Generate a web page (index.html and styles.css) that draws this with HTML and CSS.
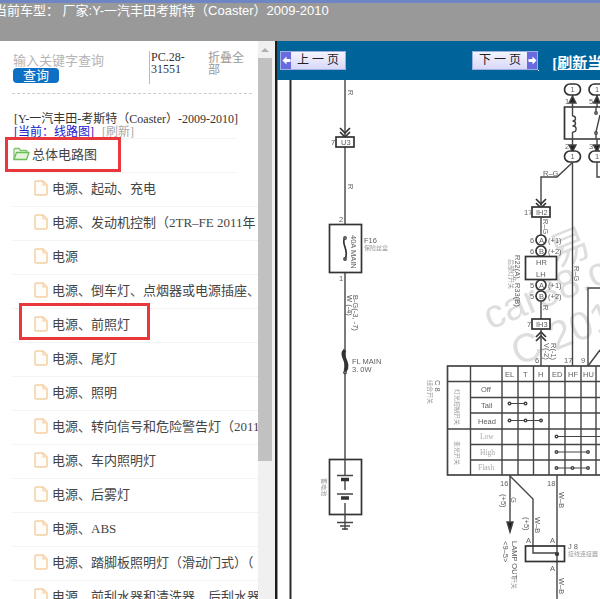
FILE: index.html
```html
<!DOCTYPE html>
<html lang="zh-CN">

<head>
    <meta charset="UTF-8">
    <title>线路图</title>
    <link rel="stylesheet" href="styles.css">
</head>

<body>
    <div class="topbar">
        <div class="car-title">当前车型： 厂家:Y-一汽丰田考斯特（Coaster）2009-2010</div>
    </div>

    <div class="main">
        <div class="side">
            <div class="search">
                <div class="search-left">
                    <div class="hint">输入关键字查询</div>
                    <div class="search-btn">查询</div>
                </div>
                <div class="pc-code">PC.28-31551</div>
                <div class="fold">折叠全部</div>
            </div>

            <div class="crumb">
                <div>[Y-一汽丰田-考斯特（Coaster）-2009-2010]</div>
                <div><a class="now">[当前：线路图]</a> <a class="refresh">[刷新]</a></div>
            </div>

            <ul class="tree">
                <li class="root">
                    <svg class="ico" width="17" height="14" viewBox="0 0 17 14">
                        <path d="M1 12.5V2.5Q1 1.5 2 1.5H6L7.5 3.5H13Q14 3.5 14 4.5V5.500" fill="#eef8e8" stroke="#7cc46a" stroke-width="1.300"/>
                        <path d="M1 12.500L3.500 5.500H16L13.500 12.500Z" fill="#e4f5da" stroke="#6cbc58" stroke-width="1.300"/>
                    </svg>
                    总体电路图
                    <span class="mark mark-root"></span>
                </li>
                <li><svg class="ico" width="14" height="16" viewBox="0 0 14 16"><use href="#doc"/></svg>电源、起动、充电</li>
                <li><svg class="ico" width="14" height="16" viewBox="0 0 14 16"><use href="#doc"/></svg>电源、发动机控制（2TR–FE 2011年</li>
                <li><svg class="ico" width="14" height="16" viewBox="0 0 14 16"><use href="#doc"/></svg>电源</li>
                <li><svg class="ico" width="14" height="16" viewBox="0 0 14 16"><use href="#doc"/></svg>电源、倒车灯、点烟器或电源插座、</li>
                <li><svg class="ico" width="14" height="16" viewBox="0 0 14 16"><use href="#doc"/></svg>电源、前照灯<span class="mark mark-item"></span></li>
                <li><svg class="ico" width="14" height="16" viewBox="0 0 14 16"><use href="#doc"/></svg>电源、尾灯</li>
                <li><svg class="ico" width="14" height="16" viewBox="0 0 14 16"><use href="#doc"/></svg>电源、照明</li>
                <li><svg class="ico" width="14" height="16" viewBox="0 0 14 16"><use href="#doc"/></svg>电源、转向信号和危险警告灯（2011</li>
                <li><svg class="ico" width="14" height="16" viewBox="0 0 14 16"><use href="#doc"/></svg>电源、车内照明灯</li>
                <li><svg class="ico" width="14" height="16" viewBox="0 0 14 16"><use href="#doc"/></svg>电源、后雾灯</li>
                <li><svg class="ico" width="14" height="16" viewBox="0 0 14 16"><use href="#doc"/></svg>电源、ABS</li>
                <li><svg class="ico" width="14" height="16" viewBox="0 0 14 16"><use href="#doc"/></svg>电源、踏脚板照明灯（滑动门式）（</li>
                <li><svg class="ico" width="14" height="16" viewBox="0 0 14 16"><use href="#doc"/></svg>电源、前刮水器和清洗器、后刮水器</li>
            </ul>
        </div>

        <div class="scroll">
            <div class="scroll-up"></div>
            <div class="scroll-thumb"></div>
        </div>

        <div class="viewer">
            <div class="pager">
                <div class="page-btn">
                    <span class="arrow">
                        <svg width="9" height="9" viewBox="0 0 9 9"><path d="M0.500 4.500L4.500 0.500V3H8.500V6H4.500V8.500Z" fill="#fff"/></svg>
                    </span>
                    <span class="page-label">上 一 页</span>
                </div>
                <div class="page-btn next">
                    <span class="page-label">下 一 页</span>
                    <span class="arrow">
                        <svg width="9" height="9" viewBox="0 0 9 9"><path d="M8.500 4.500L4.500 0.500V3H0.500V6H4.500V8.500Z" fill="#fff"/></svg>
                    </span>
                </div>
                <span class="gap-link">&nbsp;</span>
                <span class="refresh-link">[刷新当前页]</span>
            </div>

            <svg class="diagram" width="323" height="519" viewBox="277 80 323 519">
                <!-- watermark -->
                <g class="wm">
                    <text x="556" y="268" font-size="40" transform="rotate(-22 556 268)">易</text>
                    <text x="490" y="330" font-size="40" transform="rotate(-22 490 330)">car88.c</text>
                    <text x="518" y="366" font-size="40" transform="rotate(-22 518 366)">C 201</text>
                </g>

                <g class="wire">
                    <line class="edge" x1="277.500" y1="80" x2="277.500" y2="599"/>
                    <line class="frame" x1="290.500" y1="80" x2="290.500" y2="599"/>

                    <!-- left column -->
                    <line x1="345" y1="80" x2="345" y2="459"/>
                    <path class="mid" d="M340 128L345 133L350 128M340 132L345 137L350 132"/>
                    <rect class="bg mid" x="336" y="137" width="18" height="10"/>
                    <rect class="bg mid" x="329.500" y="224.500" width="32" height="48"/>
                    <path class="mid" d="M345 238C340 243 350 250 345 259"/>
                    <circle class="bg" cx="345" cy="238" r="1.200"/>
                    <circle class="bg" cx="345" cy="259" r="1.200"/>
                    <path class="fat" d="M345 350C339 356 351 363 345 371"/>
                    <circle class="bg" cx="345" cy="372.500" r="1.200"/>
                    <rect class="bg mid" x="329.500" y="459.500" width="32" height="55"/>
                    <line x1="345" y1="459" x2="345" y2="475"/>
                    <line x1="345" y1="481" x2="345" y2="490"/>
                    <line x1="345" y1="503" x2="345" y2="530"/>
                    <path d="M337 475.500H353M337 494H353M337 522.500H353M340 526H350M342 529H348"/>
                    <path class="fat" d="M341 479.500H349M341 498H349"/>

                    <!-- relay -->
                    <line x1="572.500" y1="95" x2="572.500" y2="107"/>
                    <line x1="597" y1="95" x2="597" y2="107"/>
                    <path class="tip" d="M569 103L572.500 96L576 103Z"/>
                    <path class="tip" d="M593.500 103L597 96L600 103Z"/>
                    <path class="mid" d="M600 107H564.500V139H600"/>
                    <path d="M572.500 107V116M572.500 132V139"/>
                    <path d="M572.500 116A3 2.500 0 0 1 572.500 121A3 2.500 0 0 1 572.500 126A3 2.500 0 0 1 572.500 132"/>
                    <path d="M596 107V113M596 133V139M600 115L596 132"/>
                    <circle class="bg" cx="596" cy="113" r="1.200"/>
                    <circle class="bg" cx="596" cy="133" r="1.200"/>
                    <line x1="572.500" y1="139" x2="572.500" y2="151"/>
                    <line x1="597" y1="139" x2="597" y2="151"/>
                    <path class="tip" d="M569 145L572.500 152L576 145Z"/>
                    <path class="tip" d="M593.500 145L597 152L600 145Z"/>
                    <rect class="bg mid" x="564.500" y="84" width="16" height="11" rx="5.500"/>
                    <rect class="bg mid" x="589" y="84" width="16" height="11" rx="5.500"/>
                    <rect class="bg mid" x="564.500" y="151" width="16" height="11" rx="5.500"/>
                    <rect class="bg mid" x="589" y="151" width="16" height="11" rx="5.500"/>
                    <path d="M597 162V177H600"/>

                    <line x1="572.500" y1="162" x2="572.500" y2="366"/>
                    <path d="M572 163L557 177H541V207"/>
                    <path class="mid" d="M536 199L541 204L546 199M536 203L541 208L546 203"/>
                    <rect class="bg mid" x="532" y="207" width="18" height="10"/>
                    <line x1="541" y1="217" x2="541" y2="240"/>
                    <circle class="bg mid" cx="541" cy="240" r="5"/>
                    <circle class="bg mid" cx="541" cy="251" r="5"/>
                    <rect class="bg mid" x="525.500" y="256.500" width="31" height="23"/>
                    <circle class="bg mid" cx="541" cy="285" r="5"/>
                    <circle class="bg mid" cx="541" cy="296" r="5"/>
                    <line x1="541" y1="301" x2="541" y2="319"/>
                    <rect class="bg mid" x="532" y="319" width="18" height="10"/>
                    <path class="mid" d="M536 337L541 332L546 337M536 341L541 336L546 341"/>
                    <line x1="541" y1="329" x2="541" y2="366"/>
                    <path d="M588 366V288H600"/>
                    <path d="M588 366L600 350"/>

                    <!-- switch table -->
                    <rect class="thick" x="447.500" y="366" width="160" height="109"/>
                    <path d="M470.500 366V475M502 366V475M518 366V475M533.500 366V475M549 366V475M565 366V475M581 366V475M596 366V475"/>
                    <path d="M447 381.500H600M470.500 397.500H600M470.500 413H600M447 429H600M470.500 444.500H600M470.500 460H600"/>
                    <path class="thin" d="M509 403.500H526M509 420.500H542"/>
                    <path class="thin" d="M556 436.500H600M556 452H588M556 468H588"/>
                    <circle class="bg" cx="509.500" cy="403.500" r="1.300"/>
                    <circle class="bg" cx="525.500" cy="403.500" r="1.300"/>
                    <circle class="bg" cx="509.500" cy="420.500" r="1.300"/>
                    <circle class="bg" cx="525.500" cy="420.500" r="1.300"/>
                    <circle class="bg" cx="541" cy="420.500" r="1.300"/>
                    <circle class="bg" cx="556.500" cy="436.500" r="1.300"/>
                    <circle class="bg" cx="556.500" cy="452" r="1.300"/>
                    <circle class="bg" cx="588" cy="452" r="1.300"/>
                    <circle class="bg" cx="556.500" cy="468" r="1.300"/>
                    <circle class="bg" cx="572.500" cy="468" r="1.300"/>
                    <circle class="bg" cx="588" cy="468" r="1.300"/>

                    <!-- below table -->
                    <path d="M510 475V532"/>
                    <path class="tip" d="M507 522L510 532L513 522Z"/>
                    <path d="M510 476L533 499V553H557"/>
                    <line x1="557" y1="475" x2="557" y2="599"/>
                    <rect class="mid" x="525.500" y="546" width="39" height="15.500"/>
                    <circle class="dot" cx="557" cy="554" r="1.500"/>
                </g>

                <g class="lbl">
                    <text class="rot" transform="translate(348 90) rotate(90)">R</text>
                    <text class="rot" transform="translate(348 184) rotate(90)">R</text>
                    <text x="331" y="145">7</text>
                    <text x="341" y="145">U3</text>
                    <text x="339" y="222">2</text>
                    <text x="339" y="281">1</text>
                    <text transform="translate(351 235) rotate(90)">40A MAIN</text>
                    <text x="364" y="243">F16</text>
                    <text class="tiny" x="364" y="250">保险丝盒</text>
                    <text transform="translate(353 295) rotate(90)">B-G(-3, -7)</text>
                    <text transform="translate(347 295) rotate(90)">W (-4)</text>
                    <text x="352" y="364">FL MAIN</text>
                    <text x="352" y="372">3. 0W</text>
                    <text class="tiny" transform="translate(322 478) rotate(90)">蓄电池</text>

                    <text x="570.500" y="92">1</text>
                    <text x="595" y="92">1</text>
                    <text x="570.500" y="159">1</text>
                    <text x="595" y="159">1</text>
                    <text x="565" y="104">1</text>
                    <text x="589" y="104">5</text>
                    <text x="565" y="149">2</text>
                    <text x="589" y="149">3</text>
                    <text x="543" y="176">R–G</text>
                    <text x="524" y="215">17</text>
                    <text x="536" y="215">IH2</text>
                    <text transform="translate(543 219) rotate(90)">R–G</text>
                    <text x="530" y="243">6</text>
                    <text x="539" y="243">A</text>
                    <text x="548" y="243">(+1)</text>
                    <text x="530" y="254">6</text>
                    <text x="539" y="254">B</text>
                    <text x="548" y="254">(+2)</text>
                    <text x="536" y="265">HR</text>
                    <text x="536" y="277">LH</text>
                    <text x="530" y="288">5</text>
                    <text x="539" y="288">A</text>
                    <text x="548" y="288">(+1)</text>
                    <text x="530" y="299">5</text>
                    <text x="539" y="299">B</text>
                    <text x="548" y="299">(+2)</text>
                    <text transform="translate(515 255) rotate(90)">R22(A), R33(B)</text>
                    <text class="tiny" transform="translate(509 259) rotate(90)">后部灯开关</text>
                    <text transform="translate(543 305) rotate(90)">R</text>
                    <text x="527" y="327">7</text>
                    <text x="536" y="327">IH3</text>
                    <text transform="translate(551 343) rotate(90)">R(-1)</text>
                    <text transform="translate(544 343) rotate(90)">V(-2)</text>
                    <text transform="translate(574 266) rotate(90)">R–G</text>
                    <text x="535" y="363">6</text>
                    <text x="564" y="363">17</text>
                    <text x="581" y="363">9</text>

                    <text x="505" y="377">EL</text>
                    <text x="523" y="377">T</text>
                    <text x="538" y="377">H</text>
                    <text x="552" y="377">ED</text>
                    <text x="568" y="377">HF</text>
                    <text x="583" y="377">HU</text>
                    <text x="481" y="392">Off</text>
                    <text x="481" y="408">Tail</text>
                    <text x="478" y="424">Head</text>
                    <text class="pale" x="480" y="439">Low</text>
                    <text class="pale" x="480" y="455">High</text>
                    <text class="pale" x="478" y="470">Flash</text>
                    <text transform="translate(435 380) rotate(90)">C 8</text>
                    <text class="tiny" transform="translate(428 380) rotate(90)">组合开关</text>
                    <text class="tiny" transform="translate(455 389) rotate(90)">灯光控制开关</text>
                    <text class="tiny" transform="translate(455 441) rotate(90)">变光开关</text>

                    <text x="500" y="486">16</text>
                    <text x="547" y="486">18</text>
                    <text transform="translate(501 494) rotate(90)">(+5)</text>
                    <text transform="translate(511 497) rotate(90)">G</text>
                    <text transform="translate(524 517) rotate(90)">(+5)</text>
                    <text transform="translate(535 517) rotate(90)">W–B</text>
                    <text transform="translate(559 492) rotate(90)">W–B</text>
                    <text x="526" y="543">A</text>
                    <text x="550" y="543">A</text>
                    <text x="550" y="571">A</text>
                    <text x="568" y="549">J 8</text>
                    <text class="tiny" x="568" y="556">接线连接器</text>
                    <text transform="translate(512 541) rotate(90)">LAMP OUT</text>
                    <text class="tiny" transform="translate(512 577) rotate(90)">开关</text>
                    <text transform="translate(503 541) rotate(90)">&lt;9–5&gt;</text>
                    <text transform="translate(559 578) rotate(90)">W–B</text>
                </g>
            </svg>
        </div>
    </div>

    <svg width="0" height="0" class="defs">
        <symbol id="doc" viewBox="0 0 14 16">
            <path d="M1 2Q1 1 2 1H9L13 5V14Q13 15 12 15H2Q1 15 1 14Z" fill="#fffdf9" stroke="#f4cfa2" stroke-width="1.500"/>
            <path d="M9 1V5H13" fill="none" stroke="#f4cfa2" stroke-width="1.200"/>
        </symbol>
    </svg>
</body>

</html>
```

FILE: styles.css
```css
html, body {
    margin: 0;
    height: 599px;
    overflow: hidden;
}

body {
    display: flex;
    flex-direction: column;
    background-color: #ffffff;
    font-family: "Liberation Serif", "Noto Sans CJK SC", serif;
    font-size: 13px;
    color: #333333;
}

/* top bar */
.topbar {
    height: 38px;
    flex-shrink: 0;
    background-color: #999999;
    border-top: 3px solid #6f86c4;
    overflow: hidden;
}

.car-title {
    margin-left: -6px;
    margin-top: -1px;
    font-family: "Liberation Sans", "Noto Sans CJK SC", sans-serif;
    font-size: 13px;
    line-height: 18px;
    color: #ffffff;
    white-space: nowrap;
}

.main {
    display: flex;
    flex: 1;
    min-height: 0;
}

/* left panel */
.side {
    width: 258px;
    flex-shrink: 0;
    overflow: hidden;
}

.search {
    display: flex;
    height: 42px;
    margin: 10px 6px 0 12px;
    border-bottom: 1px dashed #cccccc;
}

.search-left {
    width: 136px;
    padding-left: 1px;
    padding-top: 3px;
}

.hint {
    color: #b5b5b5;
    line-height: 14px;
    white-space: nowrap;
}

.search-btn {
    width: 46px;
    height: 15px;
    background-color: #0e70c4;
    border-radius: 4px;
    color: #ffffff;
    text-align: center;
    line-height: 15px;
}

.pc-code {
    width: 59px;
    height: 33px;
    padding: 0 23px 0 1px;
    border-left: 1px solid #bbbbbb;
    font-size: 12px;
    line-height: 12px;
    box-sizing: border-box;
    word-break: break-word;
}

.fold {
    width: 37px;
    padding-top: 1px;
    font-size: 12px;
    line-height: 12px;
    color: #999999;
}

.crumb {
    margin: 19px 0 0 14px;
    font-size: 12px;
    line-height: 13px;
    color: #333333;
    white-space: nowrap;
}

.now {
    color: #1a1ad0;
    text-decoration: underline;
}

.refresh {
    margin-left: 5px;
    color: #aaaaaa;
}

.tree {
    list-style: none;
    margin: -1px 0 0;
    padding: 0;
}

.tree li {
    position: relative;
    display: flex;
    align-items: center;
    height: 29px;
    width: 224px;
    margin-left: 13px;
    padding-left: 21px;
    padding-bottom: 4px;
    border-bottom: 1px solid #f3f3f3;
    white-space: nowrap;
    color: #444444;
}

.tree li.root {
    padding-left: 0;
    border-top: 1px solid #f3f3f3;
}

.ico {
    flex-shrink: 0;
    margin-right: 4px;
}

.root .ico {
    margin-right: 2px;
}

/* red annotation boxes */
.mark {
    position: absolute;
    border: 3px solid #e8383d;
    box-sizing: border-box;
}

.mark-root {
    left: -8px;
    top: -2px;
    width: 116px;
    height: 35px;
}

.mark-item {
    left: 6px;
    top: -6px;
    width: 131px;
    height: 37px;
}

/* fake scrollbar */
.scroll {
    width: 17px;
    flex-shrink: 0;
    background-color: #f0f0f0;
}

.scroll-up {
    width: 0;
    height: 0;
    margin: 7px 0 6px 3px;
    border-left: 4px solid transparent;
    border-right: 4px solid transparent;
    border-bottom: 4px solid #b0b0b0;
}

.scroll-thumb {
    width: 14px;
    height: 403px;
    background-color: #c1c1c1;
}

/* right panel */
.viewer {
    flex: 1;
    min-width: 0;
    border-left: 2px solid #1c1c1c;
    display: flex;
    flex-direction: column;
    overflow: hidden;
}

.pager {
    display: flex;
    align-items: center;
    height: 39px;
    flex-shrink: 0;
    padding-left: 3px;
    background-color: #00649b;
    white-space: nowrap;
}

.page-btn {
    display: flex;
    align-items: stretch;
    width: 66px;
    height: 19px;
    flex-shrink: 0;
    background: linear-gradient(#f4f4ff, #d8d8f8);
    border: 1px solid #9db0e0;
    box-sizing: border-box;
    font-size: 12px;
    color: #222222;
}

.page-btn.next {
    margin-left: 126px;
}

.arrow {
    display: flex;
    align-items: center;
    justify-content: center;
    width: 10px;
    background-color: #6a6ae0;
}

.page-label {
    flex: 1;
    text-align: center;
    line-height: 16px;
}

.gap-link {
    width: 4px;
    align-self: flex-end;
    margin-bottom: 9px;
    border-bottom: 1px solid #ffffff;
    line-height: 1px;
    font-size: 1px;
}

.refresh-link {
    margin-left: 14px;
    padding-top: 2px;
    color: #ffffff;
    font-size: 15px;
    font-weight: bold;
    text-decoration: underline;
}

.diagram {
    display: block;
    flex-shrink: 0;
    background-color: #ffffff;
    filter: blur(0.4px);
}

.wire {
    fill: none;
    stroke: #444444;
    stroke-width: 1.400;
}

.edge {
    stroke: #999999;
    stroke-width: 1;
}

.frame {
    stroke: #2a2a2a;
    stroke-width: 2;
}

.mid {
    stroke-width: 1.700;
    stroke: #333333;
}

.wire .fat {
    stroke-width: 3.500;
    stroke: #333333;
}

.thick {
    stroke-width: 1.700;
}

.thin {
    stroke-width: 1;
}

.bg {
    fill: #ffffff;
}

.tip,
.dot {
    fill: #222222;
}

.lbl text {
    font-family: "Liberation Sans", "Noto Sans CJK SC", sans-serif;
    font-size: 7.500px;
    fill: #606060;
}

.lbl .tiny {
    font-size: 6px;
    fill: #999999;
}

.lbl .pale {
    fill: #aaaaaa;
    font-family: "Liberation Serif", serif;
}

.wm text {
    font-family: "Liberation Sans", "Noto Sans CJK SC", sans-serif;
    fill: #dedede;
}

.defs {
    position: absolute;
}
```
